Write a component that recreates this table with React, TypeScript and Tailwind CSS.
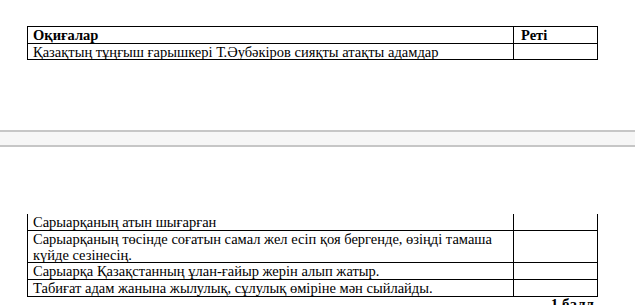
import React from 'react';

type Row = { text: React.ReactNode; h: string; bold?: boolean; right?: string };

const Table = ({ rows, top }: { rows: Row[]; top: boolean }) => (
  <div className={`w-[571px] border-x border-black ${top ? 'border-t' : ''}`}>
    {rows.map((r, i) => (
      <div key={i} className={`flex border-b border-black ${r.h} ${r.bold ? 'font-bold' : ''}`}>
        <div className="w-[486px] shrink-0 border-r border-black pl-[5px]">{r.text}</div>
        <div className="flex-1 pl-[7px]">{r.right}</div>
      </div>
    ))}
  </div>
);

const topRows: Row[] = [
  { text: 'Оқиғалар', right: 'Реті', h: 'h-[17px]', bold: true },
  { text: 'Қазақтың тұңғыш ғарышкері Т.Әубәкіров сияқты атақты адамдар', h: 'h-[16px]' },
];

const bottomRows: Row[] = [
  { text: 'Сарыарқаның атын шығарған', h: 'h-[17px]' },
  {
    text: (
      <>
        Сарыарқаның төсінде соғатын самал жел есіп қоя бергенде, өзіңді тамаша
        <br />
        күйде сезінесің.
      </>
    ),
    h: 'h-[32px]',
  },
  { text: 'Сарыарқа Қазақстанның ұлан-ғайыр жерін алып жатыр.', h: 'h-[17px]' },
  { text: 'Табиғат адам жанына жылулық, сұлулық өміріне мән сыйлайды.', h: 'h-[17px]' },
];

export default function App() {
  return (
    <div className="w-[635px] h-[305px] overflow-hidden bg-white text-black font-['Liberation_Serif'] text-[14.5px] leading-[16px] whitespace-nowrap">
      {/* end of first page */}
      <div className="pt-[26px] pl-[27px]">
        <Table rows={topRows} top />
      </div>

      {/* page gap */}
      <div className="mt-[70px] h-[17px] border-y-2 border-[#c6c6c6] bg-[#f6f6f6]" />

      {/* start of next page */}
      <div className="mt-[67px] pl-[27px]">
        <Table rows={bottomRows} top={false} />
        <div className="w-[571px] flex justify-end pr-[4px] -mt-[1px] font-bold text-[15px]">1 балл</div>
      </div>
    </div>
  );
}
